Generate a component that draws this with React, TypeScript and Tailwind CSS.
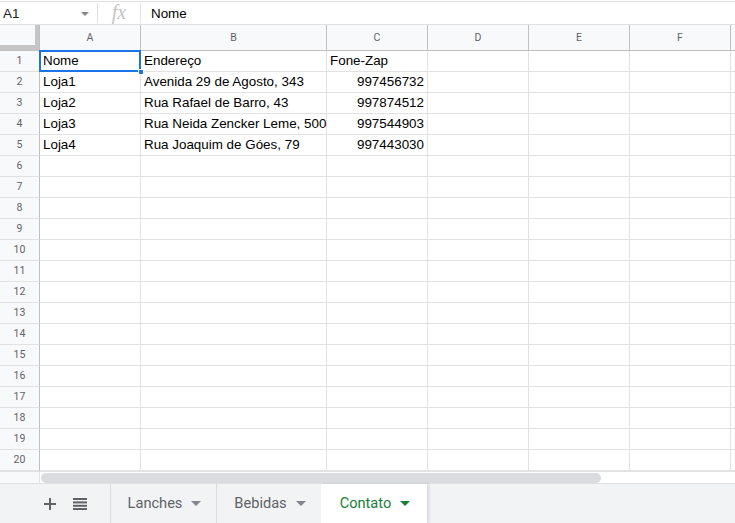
import React from "react";

const cols = [
  { l: "A", w: 101 },
  { l: "B", w: 186 },
  { l: "C", w: 101 },
  { l: "D", w: 101 },
  { l: "E", w: 101 },
  { l: "F", w: 101 },
  { l: "", w: 200 },
];

const data: string[][] = [
  ["Nome", "Endereço", "Fone-Zap"],
  ["Loja1", "Avenida 29 de Agosto, 343", "997456732"],
  ["Loja2", "Rua Rafael de Barro, 43", "997874512"],
  ["Loja3", "Rua Neida Zencker Leme, 500", "997544903"],
  ["Loja4", "Rua Joaquim de Góes, 79", "997443030"],
];

function Caret({ color }: { color: string }) {
  return (
    <svg width="10" height="5" viewBox="0 0 10 5" className="ml-[9px]">
      <path d="M0 0 L10 0 L5 5 Z" fill={color} />
    </svg>
  );
}

export default function App() {
  const rows = Array.from({ length: 20 }, (_, i) => i + 1);
  return (
    <div className="w-[735px] h-[523px] overflow-hidden bg-white flex flex-col" style={{ fontFamily: "'Liberation Sans', Arial, sans-serif" }}>
      {/* formula bar */}
      <div className="mt-px h-[24px] border-t border-b border-[#e0e0e0] flex items-center shrink-0">
        <div className="w-[97px] h-full flex items-center pl-[3px] pr-[8px] pt-[2px] text-[13.4px] text-[#222]">
          <span className="flex-1">A1</span>
          <svg width="8" height="4" viewBox="0 0 8 4"><path d="M0 0 L8 0 L4 4 Z" fill="#888" /></svg>
        </div>
        <div className="w-px h-[20px] bg-[#e0e0e0]" />
        <div className="w-[42px] h-full flex items-center justify-center text-[#c4c4c4] italic text-[20px] leading-none pb-[2px]" style={{ fontFamily: "'Liberation Serif', serif" }}>fx</div>
        <div className="w-px h-[20px] bg-[#e0e0e0]" />
        <div className="pl-[10px] pt-[2px] text-[13.4px] text-black">Nome</div>
      </div>
      {/* column header */}
      <div className="flex h-[26px] shrink-0 bg-[#f8f9fa] border-b border-[#c0c0c0]">
        <div className="w-[40px] h-full border-r border-[#c0c0c0] relative shrink-0">
          <div className="absolute left-0 right-[0px] bottom-0 h-[5px] bg-[#c6c6c6]" />
          <div className="absolute right-0 top-0 bottom-0 w-[4px] bg-[#c6c6c6]" />
        </div>
        {cols.map((c, i) => (
          <div
            key={i}
            className="h-full border-r border-[#c0c0c0] flex items-center justify-center text-[10.5px] text-[#5f6368] shrink-0"
            style={{ width: c.w, fontFamily: "Roboto, sans-serif" }}
          >
            {c.l}
          </div>
        ))}
      </div>
      {/* grid */}
      <div className="flex flex-col shrink-0">
        {rows.map((r) => {
          const rd = data[r - 1] || [];
          return (
            <div key={r} className="flex h-[21px]">
              <div className="w-[40px] h-full shrink-0 bg-[#f8f9fa] border-r border-b border-r-[#c0c0c0] border-b-[#e2e2e2] flex items-center justify-center text-[10.5px] text-[#5f6368]" style={{ fontFamily: "Roboto, sans-serif" }}>
                {r}
              </div>
              {cols.map((c, ci) => {
                const v = rd[ci] ?? "";
                const num = /^\d+$/.test(v);
                const sel = r === 1 && ci === 0;
                return (
                  <div
                    key={ci}
                    className={
                      "h-full shrink-0 border-r border-b border-[#e2e2e2] flex items-center text-[13.4px] text-black whitespace-nowrap overflow-visible relative " +
                      (num ? "justify-end pr-[3px]" : "pl-[3px]")
                    }
                    style={{ width: c.w }}
                  >
                    {sel && (
                      <>
                        <div className="absolute left-[-1px] top-[-1px] right-[-1px] bottom-[-1px] border-2 border-[#1a73e8] pointer-events-none" />
                        <div className="absolute right-[-4px] bottom-[-4px] w-[6px] h-[6px] bg-[#1a73e8] border border-white z-10" />
                      </>
                    )}
                    <span className="relative">{v}</span>
                  </div>
                );
              })}
            </div>
          );
        })}
      </div>
      {/* scrollbar */}
      <div className="h-[12px] flex shrink-0 border-t border-[#e2e2e2]">
        <div className="w-[40px] h-full bg-[#f8f9fa] border-r border-[#e2e2e2]" />
        <div className="flex-1 flex items-center pl-px">
          <div className="w-[560px] h-[10px] rounded-full bg-[#dadce0]" />
        </div>
      </div>
      {/* tab bar */}
      <div className="flex-1 bg-[#f1f3f4] border-t border-[#e0e0e0] flex items-stretch" style={{ fontFamily: "Roboto, sans-serif" }}>
        <div className="w-[110px] flex items-center shrink-0">
          <svg width="12" height="12" viewBox="0 0 12 12" className="ml-[44px]">
            <path d="M5 0h2v5h5v2H7v5H5V7H0V5h5z" fill="#5f6368" />
          </svg>
          <svg width="14" height="12" viewBox="0 0 14 12" className="ml-[17px]">
            <rect x="0" y="0" width="14" height="2" fill="#5f6368" />
            <rect x="0" y="3.4" width="14" height="2" fill="#5f6368" />
            <rect x="0" y="6.8" width="14" height="2" fill="#5f6368" />
            <rect x="0" y="10" width="14" height="2" fill="#5f6368" />
          </svg>
        </div>
        <div className="w-[106px] border-l border-[#dadce0] flex items-center justify-center text-[14.6px] text-[#5f6368] pl-[2px]">
          Lanches
          <Caret color="#80868b" />
        </div>
        <div className="w-[105px] border-l border-[#dadce0] flex items-center justify-center text-[14.6px] text-[#5f6368] pl-[2px]">
          Bebidas
          <Caret color="#80868b" />
        </div>
        <div className="w-[106px] bg-white flex items-center justify-center text-[14.6px] text-[#188038] pl-[2px] shadow-[2px_0_3px_rgba(0,0,0,0.12)] relative">
          Contato
          <Caret color="#188038" />
        </div>
      </div>
    </div>
  );
}
